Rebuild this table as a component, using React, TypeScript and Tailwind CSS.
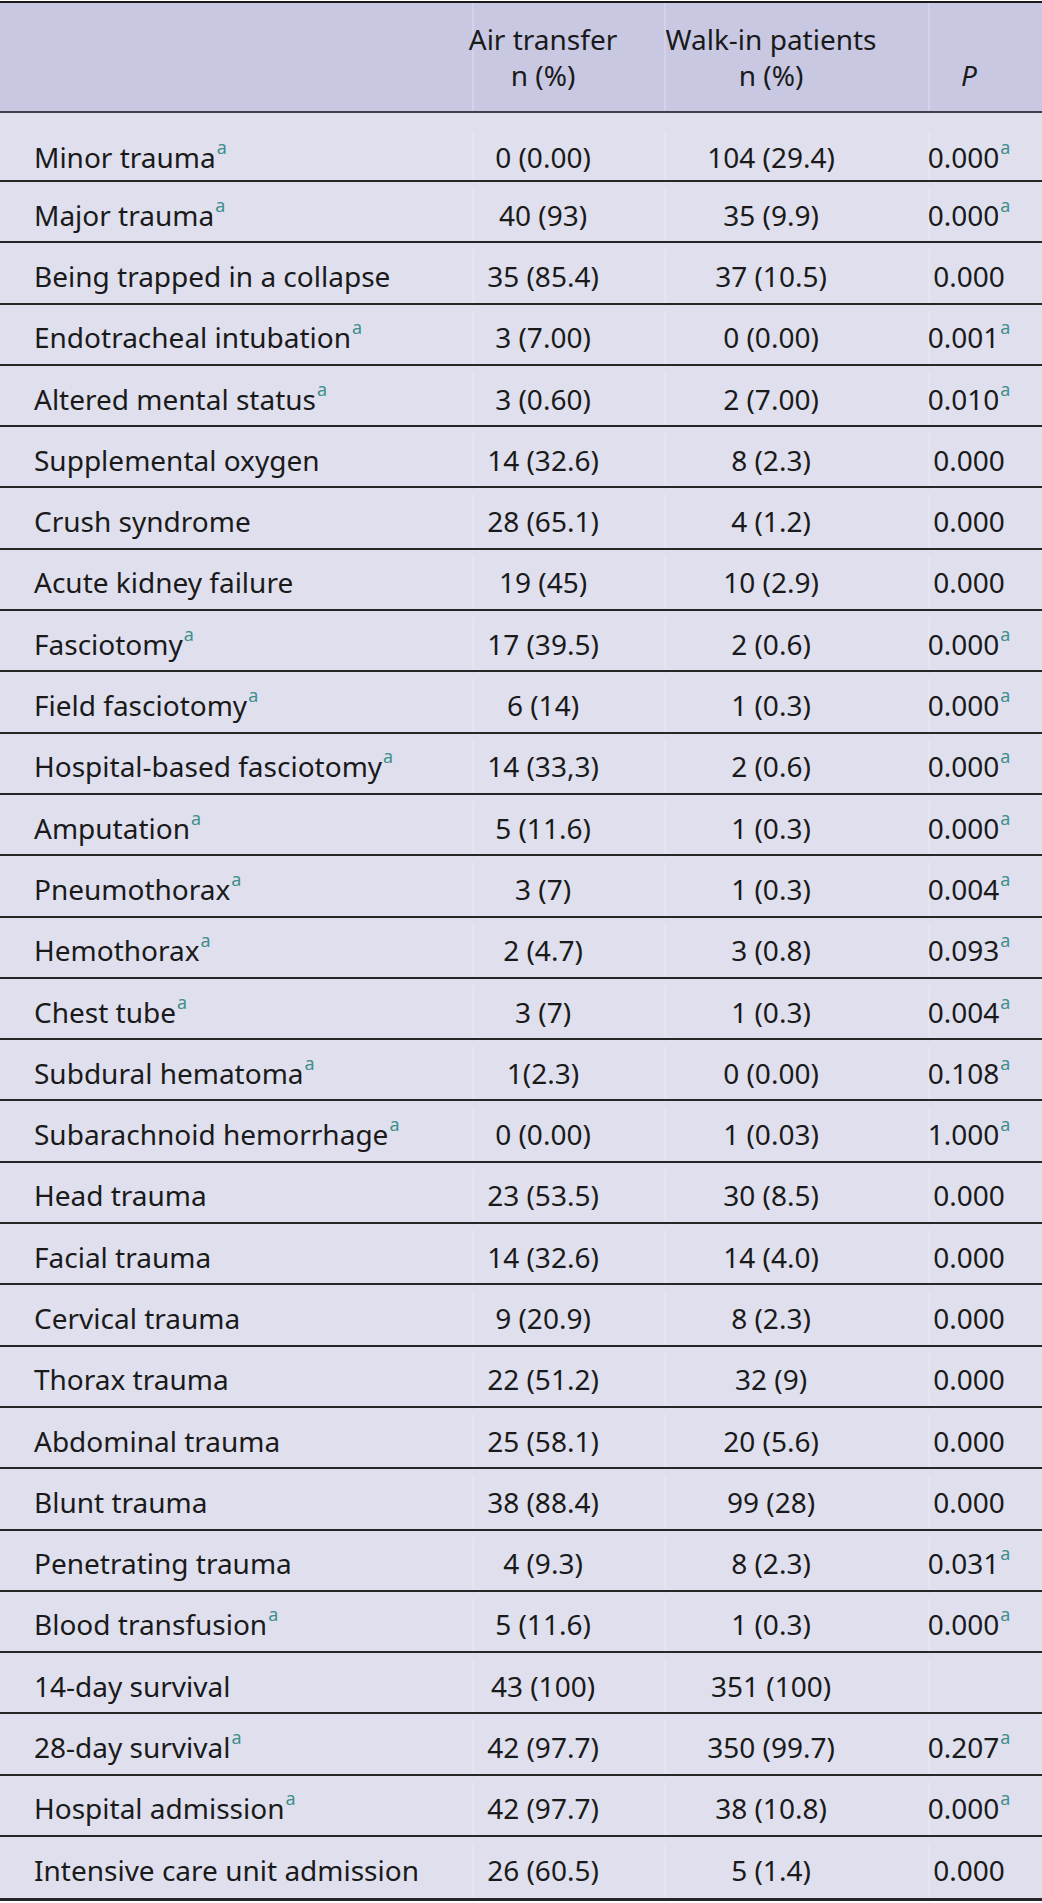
import React from "react";

type Row = [string, boolean, string, string, string, boolean];

const rows: Row[] = [
  ["Minor trauma", true, "0 (0.00)", "104 (29.4)", "0.000", true],
  ["Major trauma", true, "40 (93)", "35 (9.9)", "0.000", true],
  ["Being trapped in a collapse", false, "35 (85.4)", "37 (10.5)", "0.000", false],
  ["Endotracheal intubation", true, "3 (7.00)", "0 (0.00)", "0.001", true],
  ["Altered mental status", true, "3 (0.60)", "2 (7.00)", "0.010", true],
  ["Supplemental oxygen", false, "14 (32.6)", "8 (2.3)", "0.000", false],
  ["Crush syndrome", false, "28 (65.1)", "4 (1.2)", "0.000", false],
  ["Acute kidney failure", false, "19 (45)", "10 (2.9)", "0.000", false],
  ["Fasciotomy", true, "17 (39.5)", "2 (0.6)", "0.000", true],
  ["Field fasciotomy", true, "6 (14)", "1 (0.3)", "0.000", true],
  ["Hospital-based fasciotomy", true, "14 (33,3)", "2 (0.6)", "0.000", true],
  ["Amputation", true, "5 (11.6)", "1 (0.3)", "0.000", true],
  ["Pneumothorax", true, "3 (7)", "1 (0.3)", "0.004", true],
  ["Hemothorax", true, "2 (4.7)", "3 (0.8)", "0.093", true],
  ["Chest tube", true, "3 (7)", "1 (0.3)", "0.004", true],
  ["Subdural hematoma", true, "1(2.3)", "0 (0.00)", "0.108", true],
  ["Subarachnoid hemorrhage", true, "0 (0.00)", "1 (0.03)", "1.000", true],
  ["Head trauma", false, "23 (53.5)", "30 (8.5)", "0.000", false],
  ["Facial trauma", false, "14 (32.6)", "14 (4.0)", "0.000", false],
  ["Cervical trauma", false, "9 (20.9)", "8 (2.3)", "0.000", false],
  ["Thorax trauma", false, "22 (51.2)", "32 (9)", "0.000", false],
  ["Abdominal trauma", false, "25 (58.1)", "20 (5.6)", "0.000", false],
  ["Blunt trauma", false, "38 (88.4)", "99 (28)", "0.000", false],
  ["Penetrating trauma", false, "4 (9.3)", "8 (2.3)", "0.031", true],
  ["Blood transfusion", true, "5 (11.6)", "1 (0.3)", "0.000", true],
  ["14-day survival", false, "43 (100)", "351 (100)", "", false],
  ["28-day survival", true, "42 (97.7)", "350 (99.7)", "0.207", true],
  ["Hospital admission", true, "42 (97.7)", "38 (10.8)", "0.000", true],
  ["Intensive care unit admission", false, "26 (60.5)", "5 (1.4)", "0.000", false],
];

const Sup = () => (
  <span className="inline-block align-top text-[18px] leading-[18px] text-[#3f8f8c] ml-[1px] -mt-[1px]">
    a
  </span>
);

export default function App() {
  return (
    <div
      className="w-[1042px] bg-white pt-[1px] text-[#1a1a1a]"
      style={{ fontFamily: '"Noto Sans", "Open Sans", sans-serif' }}
    >
      <div className="border-t-2 border-[#1a1a1a]">
        {/* Header */}
        <div className="grid grid-cols-[472px_192px_264px_114px] h-[110px] bg-[#c8c8e3] border-b-2 border-[#3e3e4e] text-[28px] leading-[36px] whitespace-nowrap">
          <div />
          <div className="border-l-2 border-white/20 flex flex-col items-center pt-[18px] pr-[52px]">
            <span>Air transfer</span>
            <span>n (%)</span>
          </div>
          <div className="border-l-2 border-white/20 flex flex-col items-center pt-[18px] pr-[52px]">
            <span>Walk-in patients</span>
            <span>n (%)</span>
          </div>
          <div className="border-l-2 border-white/20 flex flex-col items-center pt-[18px] pr-[34px]">
            <span>&nbsp;</span>
            <span className="italic">P</span>
          </div>
        </div>

        {/* Body */}
        {rows.map((r, i) => {
          const first = i === 0;
          const last = i === rows.length - 1;
          const h = first
            ? "h-[69px] pt-[20px]"
            : last
            ? "h-[64.3px] border-b-[3px] pt-[5px]"
            : "h-[61.3px] pt-[6px]";
          return (
            <div
              key={i}
              className={`grid grid-cols-[472px_192px_264px_114px] bg-[#dfdfee] border-b-2 border-[#262626] text-[28px] leading-[36px] whitespace-nowrap ${h}`}
            >
              <div className="flex items-center pl-[34px]">
                <span>
                  {r[0]}
                  {r[1] && <Sup />}
                </span>
              </div>
              <div className="border-l-2 border-white/20 flex items-center justify-center pr-[52px]">
                <span>{r[2]}</span>
              </div>
              <div className="border-l-2 border-white/20 flex items-center justify-center pr-[52px]">
                <span>{r[3]}</span>
              </div>
              <div className="border-l-2 border-white/20 flex items-center justify-center pr-[34px]">
                <span>
                  {r[4]}
                  {r[5] && <Sup />}
                </span>
              </div>
            </div>
          );
        })}
      </div>
    </div>
  );
}
